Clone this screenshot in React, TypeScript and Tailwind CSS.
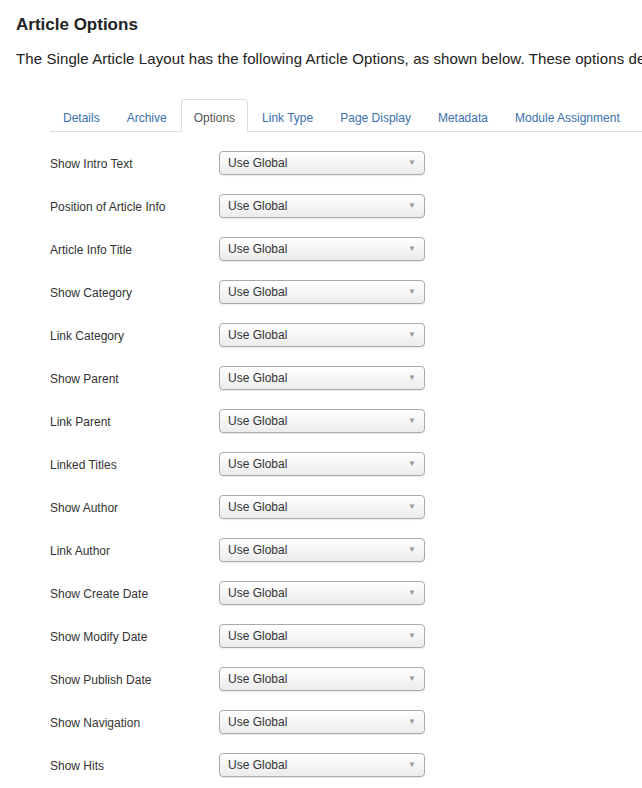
import React from "react";

const tabs = ["Details", "Archive", "Options", "Link Type", "Page Display", "Metadata", "Module Assignment"];

const rows = [
  "Show Intro Text",
  "Position of Article Info",
  "Article Info Title",
  "Show Category",
  "Link Category",
  "Show Parent",
  "Link Parent",
  "Linked Titles",
  "Show Author",
  "Link Author",
  "Show Create Date",
  "Show Modify Date",
  "Show Publish Date",
  "Show Navigation",
  "Show Hits",
];

function FakeSelect() {
  return (
    <div className="flex items-center justify-between w-[206px] h-[24px] pl-[8px] pr-[8px] border border-[#aaa] rounded-[4px] bg-gradient-to-b from-white to-[#ececec] shadow-[0_1px_1px_rgba(0,0,0,0.08)] text-[12px] text-[#333]">
      <span>Use Global</span>
      <span className="text-[8px] text-[#999] leading-none">▼</span>
    </div>
  );
}

export default function App() {
  return (
    <div className="w-[642px] h-[788px] overflow-hidden bg-white text-[#222] font-['Liberation_Sans',Arial,sans-serif]">
      <h2 className="pl-[16px] pt-[15px] text-[17px] font-bold leading-[20px] text-[#222]">Article Options</h2>
      <p className="pl-[16px] pt-[15px] text-[15px] tracking-[0.1px] leading-[18px] whitespace-nowrap text-[#222]">
        The Single Article Layout has the following Article Options, as shown below. These options determine the layout.
      </p>

      <div className="mt-[31px] ml-[50px] flex h-[33px] border-b border-[#ddd]">
        {tabs.map((t) => (
          <div
            key={t}
            className={
              t === "Options"
                ? "h-[33px] px-[12px] mr-[1px] pt-[9px] text-[12px] text-[#555] border border-[#ddd] border-b-white rounded-t-[4px] bg-white -mb-px"
                : "h-[32px] px-[13px] mr-[1px] pt-[10px] text-[12px] text-[#3a6fae]"
            }
          >
            {t}
          </div>
        ))}
      </div>

      <div className="pl-[50px] pt-[19px] flex flex-col gap-[19px]">
        {rows.map((r) => (
          <div key={r} className="flex items-center h-[24px]">
            <div className="w-[169px] text-[12px] text-[#333] pt-[2px]">{r}</div>
            <FakeSelect />
          </div>
        ))}
      </div>
    </div>
  );
}
